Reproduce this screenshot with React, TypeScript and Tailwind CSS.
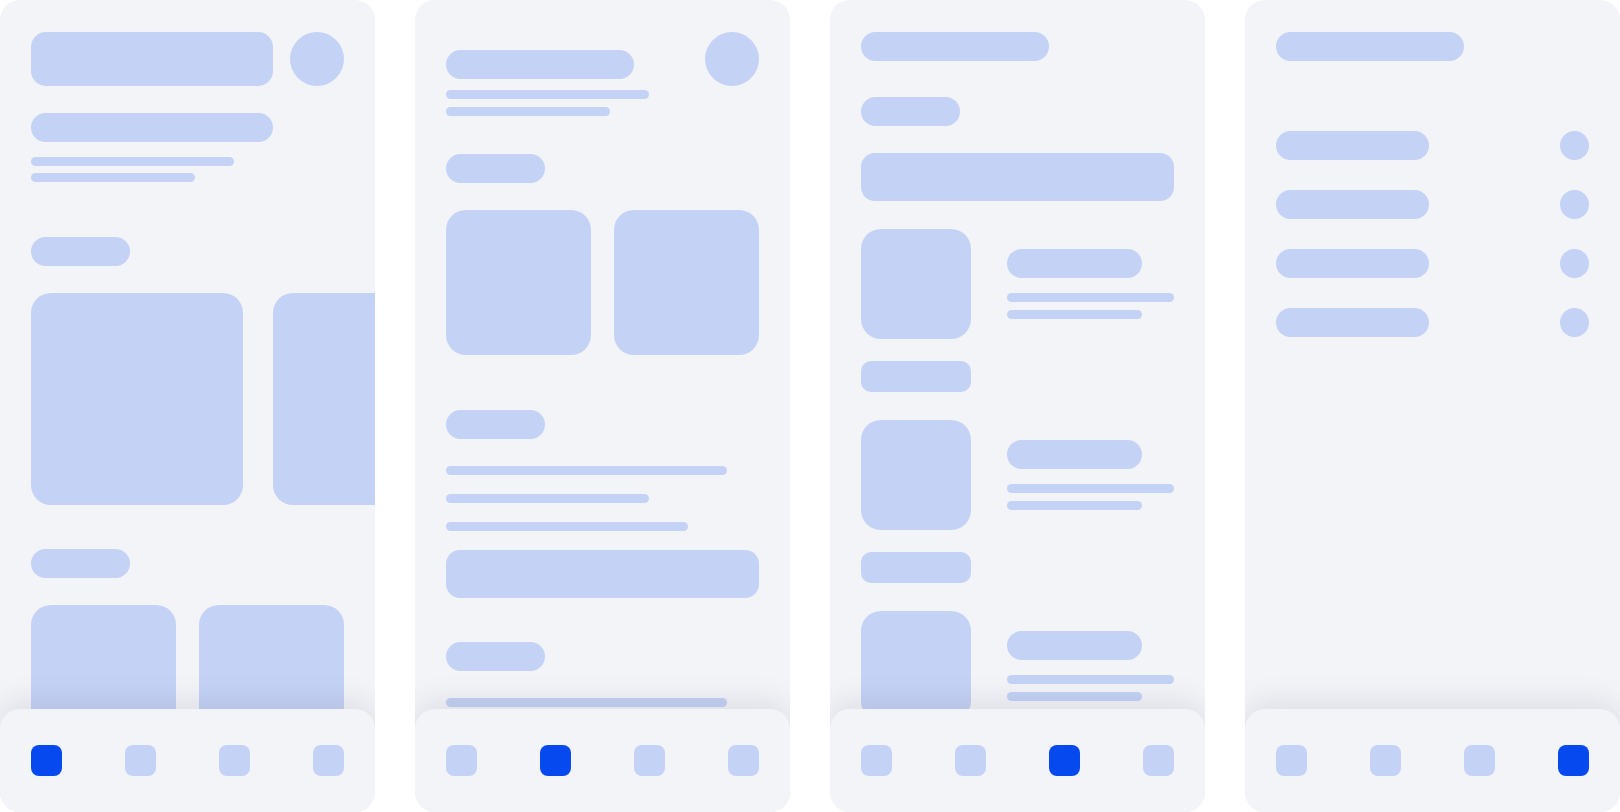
import React from 'react';

// skeleton colour and card colour
const sk = 'bg-[#c4d2f5]';

const Bar: React.FC<{ className: string }> = ({ className }) => (
  <div className={`${sk} shrink-0 ${className}`} />
);

const Pill: React.FC<{ w: string }> = ({ w }) => <Bar className={`${w} h-[29px] rounded-full`} />;
const Line: React.FC<{ w: string; className?: string }> = ({ w, className = '' }) => (
  <Bar className={`${w} h-[9px] rounded-full ${className}`} />
);

const BottomNav: React.FC<{ active: number }> = ({ active }) => (
  <div className="relative z-10 shrink-0 flex items-center justify-between px-[31px] py-[36px] rounded-t-[20px] bg-[#f2f4f8] shadow-[0_-6px_32px_rgba(15,23,42,0.10)]">
    {[0, 1, 2, 3].map((i) => (
      <div
        key={i}
        className={`w-[31px] h-[31px] rounded-[8px] ${i === active ? 'bg-[#0549ef]' : sk}`}
      />
    ))}
  </div>
);

const Phone: React.FC<{ active: number; children: React.ReactNode }> = ({ active, children }) => (
  <div className="w-[375px] h-[812px] shrink-0 flex flex-col rounded-[20px] bg-[#f2f4f8] overflow-hidden">
    <div className="flex-1 min-h-0 overflow-hidden px-[31px] pt-[32px]">{children}</div>
    <BottomNav active={active} />
  </div>
);

const HomeScreen = () => (
  <Phone active={0}>
    <div className="flex items-start justify-between">
      <Bar className="w-[242px] h-[54px] rounded-[15px]" />
      <Bar className="w-[54px] h-[54px] rounded-full" />
    </div>
    <div className="mt-[27px]">
      <Pill w="w-[242px]" />
    </div>
    <Line w="w-[203px]" className="mt-[15px]" />
    <Line w="w-[164px]" className="mt-[7px]" />
    <div className="mt-[55px]">
      <Pill w="w-[99px]" />
    </div>
    <div className="mt-[27px] flex gap-[30px]">
      <Bar className="w-[212px] h-[212px] rounded-[20px]" />
      <Bar className="w-[212px] h-[212px] rounded-[20px]" />
    </div>
    <div className="mt-[44px]">
      <Pill w="w-[99px]" />
    </div>
    <div className="mt-[27px] flex gap-[23px]">
      <Bar className="w-[145px] h-[145px] rounded-[20px]" />
      <Bar className="w-[145px] h-[145px] rounded-[20px]" />
    </div>
  </Phone>
);

const DetailScreen = () => (
  <Phone active={1}>
    <div className="flex items-start justify-between">
      <div className="pt-[18px] flex flex-col">
        <Pill w="w-[188px]" />
        <Line w="w-[203px]" className="mt-[11px]" />
        <Line w="w-[164px]" className="mt-[8px]" />
      </div>
      <Bar className="w-[54px] h-[54px] rounded-full" />
    </div>
    <div className="mt-[38px]">
      <Pill w="w-[99px]" />
    </div>
    <div className="mt-[27px] flex gap-[23px]">
      <Bar className="w-[145px] h-[145px] rounded-[20px]" />
      <Bar className="w-[145px] h-[145px] rounded-[20px]" />
    </div>
    <div className="mt-[55px]">
      <Pill w="w-[99px]" />
    </div>
    <Line w="w-[281px]" className="mt-[27px]" />
    <Line w="w-[203px]" className="mt-[19px]" />
    <Line w="w-[242px]" className="mt-[19px]" />
    <Bar className="mt-[19px] w-full h-[48px] rounded-[14px]" />
    <div className="mt-[44px]">
      <Pill w="w-[99px]" />
    </div>
    <Line w="w-[281px]" className="mt-[27px]" />
  </Phone>
);

const ListRow = () => (
  <div className="flex items-start gap-[36px]">
    <div className="flex flex-col">
      <Bar className="w-[110px] h-[110px] rounded-[20px]" />
      <Bar className="mt-[22px] w-[110px] h-[31px] rounded-[10px]" />
    </div>
    <div className="pt-[20px] flex flex-col">
      <Pill w="w-[135px]" />
      <Line w="w-[167px]" className="mt-[15px]" />
      <Line w="w-[135px]" className="mt-[8px]" />
    </div>
  </div>
);

const ListScreen = () => (
  <Phone active={2}>
    <Pill w="w-[188px]" />
    <div className="mt-[36px]">
      <Pill w="w-[99px]" />
    </div>
    <Bar className="mt-[27px] w-full h-[48px] rounded-[14px]" />
    <div className="mt-[28px] flex flex-col gap-[28px]">
      <ListRow />
      <ListRow />
      <ListRow />
    </div>
  </Phone>
);

const SettingsScreen = () => (
  <Phone active={3}>
    <Pill w="w-[188px]" />
    <div className="mt-[70px] flex flex-col gap-[30px]">
      {[0, 1, 2, 3].map((i) => (
        <div key={i} className="flex items-center justify-between">
          <Pill w="w-[153px]" />
          <Bar className="w-[29px] h-[29px] rounded-full" />
        </div>
      ))}
    </div>
  </Phone>
);

export default function App() {
  return (
    <div className="w-[1620px] h-[812px] bg-white flex gap-[40px] overflow-hidden">
      <HomeScreen />
      <DetailScreen />
      <ListScreen />
      <SettingsScreen />
    </div>
  );
}
